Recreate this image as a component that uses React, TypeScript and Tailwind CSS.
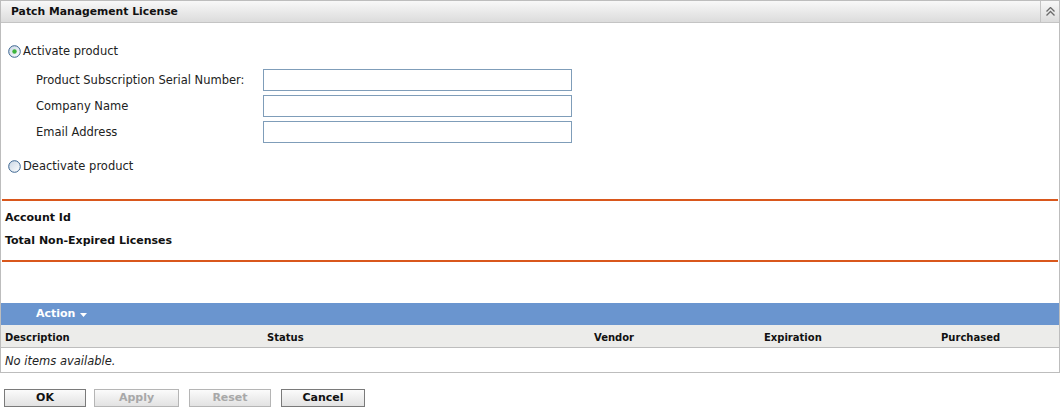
import React from "react";

const font = { fontFamily: "'DejaVu Sans', 'Liberation Sans', sans-serif" };

function Radio({ checked }: { checked?: boolean }) {
  const id = checked ? "rg1" : "rg2";
  return (
    <svg width="13" height="13" viewBox="0 0 13 13" className="shrink-0">
      <defs>
        <linearGradient id={id} x1="0" y1="0" x2="1" y2="1">
          <stop offset="0" stopColor="#c9d6e4" />
          <stop offset="1" stopColor="#ffffff" />
        </linearGradient>
      </defs>
      <circle cx="6.5" cy="6.5" r="5.8" fill={`url(#${id})`} stroke="#3a6490" strokeWidth="1" />
      {checked && <circle cx="6.5" cy="6.5" r="2.2" fill="#3cb43c" />}
    </svg>
  );
}

function Field({ label }: { label: string }) {
  return (
    <div className="flex items-center h-[22px]">
      <div className="w-[227px] text-[11.5px] text-[#222] pt-[1px]">{label}</div>
      <div className="w-[309px] h-[22px] border border-[#7f9db9] bg-white" />
    </div>
  );
}

function Btn({ label, w, disabled }: { label: string; w: string; disabled?: boolean }) {
  return (
    <div
      className={`${w} h-[18px] flex items-center justify-center border bg-gradient-to-b from-[#fbfbfb] to-[#e2e2e2] text-[11px] font-bold ${
        disabled ? "border-[#b5b5b5] text-[#a8a8a8]" : "border-[#7a7a7a] text-[#111]"
      }`}
    >
      {label}
    </div>
  );
}

export default function App() {
  return (
    <div className="w-[1060px] h-[409px] bg-white" style={font}>
      <div className="border border-[#bdbdbd]">
        <div className="h-[22px] flex border-b border-[#c4c4c4] bg-gradient-to-b from-[#f8f8f8] to-[#dcdcdc]">
          <div className="flex-1 pl-[10px] pt-[1px] flex items-center text-[10.8px] font-bold text-[#111]">
            Patch Management License
          </div>
          <div className="w-[19px] border-l border-[#c4c4c4] flex items-center justify-center">
            <svg width="9" height="9" viewBox="0 0 9 9">
              <path d="M0.5 4.5 L4.5 0.5 L8.5 4.5 M0.5 8.5 L4.5 4.5 L8.5 8.5" fill="none" stroke="#6a6a6a" strokeWidth="1.3" />
            </svg>
          </div>
        </div>

        <div className="mt-[20px] pl-[7px] h-[16px] flex items-center gap-[2px] text-[11.5px] text-[#222]">
          <Radio checked />
          <span className="pt-[2px]">Activate product</span>
        </div>

        <div className="mt-[10px] pl-[35px] flex flex-col gap-[4px]">
          <Field label="Product Subscription Serial Number:" />
          <Field label="Company Name" />
          <Field label="Email Address" />
        </div>

        <div className="mt-[15px] pl-[7px] h-[16px] flex items-center gap-[2px] text-[11.5px] text-[#222]">
          <Radio />
          <span className="pt-[2px]">Deactivate product</span>
        </div>

        <div className="mt-[25px] mx-px h-[2px] bg-[#d9571c]" />
        <div className="mt-[8px] pl-[4px] pt-[3px] h-[16px] flex items-center text-[11px] font-bold text-[#111]">Account Id</div>
        <div className="mt-[7px] pl-[4px] pt-[3px] h-[16px] flex items-center text-[11px] font-bold text-[#111]">
          Total Non-Expired Licenses
        </div>
        <div className="mt-[12px] mx-px h-[2px] bg-[#d9571c]" />
        <div className="h-[41px]" />

        <div className="h-[22px] bg-[#6a95cf] flex items-center pl-[35px] pt-[1px] gap-[5px] text-[11px] font-bold text-white">
          <span>Action</span>
          <svg width="7" height="4" viewBox="0 0 7 4">
            <path d="M0 0 H7 L3.5 4 Z" fill="#ffffff" />
          </svg>
        </div>
        <div className="h-[23px] bg-[#ececea] border-b border-[#bdbdbd] grid grid-cols-[262px_327px_170px_177px_1fr] items-center pl-[4px] pt-[3px] text-[10px] font-bold text-[#111]">
          <span>Description</span>
          <span>Status</span>
          <span>Vendor</span>
          <span>Expiration</span>
          <span>Purchased</span>
        </div>
        <div className="h-[24px] flex items-center pl-[4px] pt-[4px] text-[11.5px] italic text-[#222]">No items available.</div>
      </div>

      <div className="mt-[16px] pl-[4px] flex">
        <Btn label="OK" w="w-[82px]" />
        <div className="w-[8px]" />
        <Btn label="Apply" w="w-[85px]" disabled />
        <div className="w-[10px]" />
        <Btn label="Reset" w="w-[82px]" disabled />
        <div className="w-[10px]" />
        <Btn label="Cancel" w="w-[84px]" />
      </div>
    </div>
  );
}
